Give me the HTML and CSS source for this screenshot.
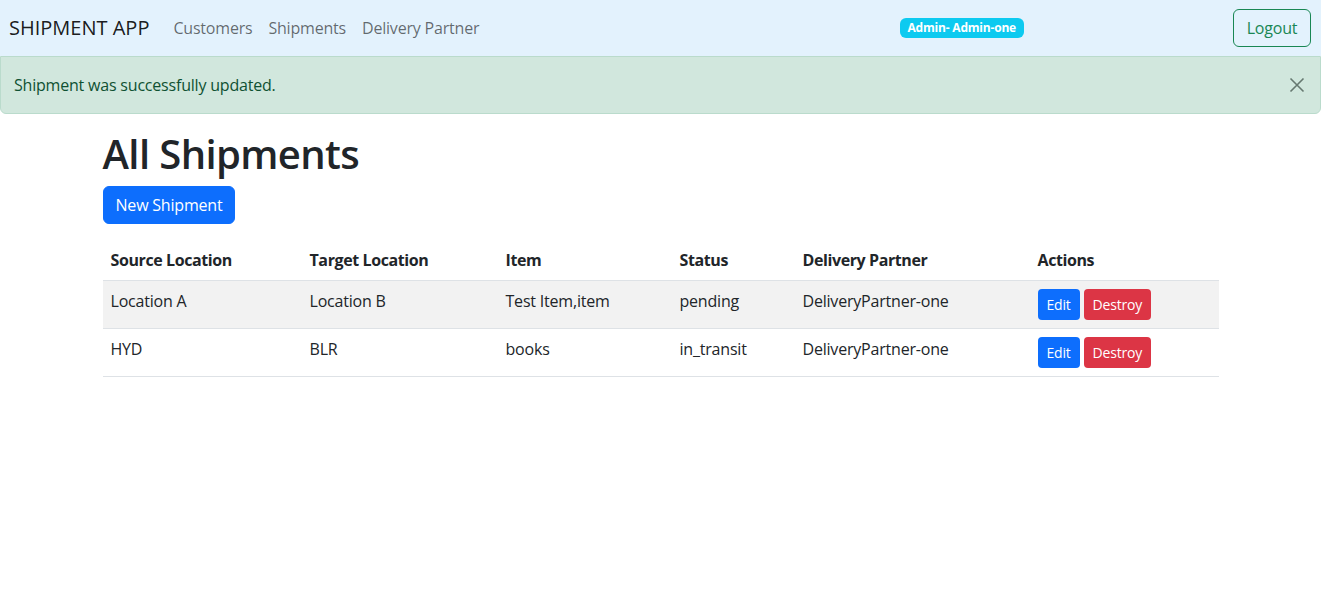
FILE: index.html
```html
<!DOCTYPE html>
<html lang="en">
<head>
<meta charset="utf-8">
<title>Shipment App</title>
<link rel="stylesheet" href="styles.css">
</head>
<body>
<nav class="navbar">
  <a class="brand" href="#">SHIPMENT APP</a>
  <ul class="nav-links">
    <li><a href="#">Customers</a></li>
    <li><a href="#">Shipments</a></li>
    <li><a href="#">Delivery Partner</a></li>
  </ul>
  <span class="badge">Admin- Admin-one</span>
  <button class="btn-logout">Logout</button>
</nav>
<div class="alert">
  <span>Shipment was successfully updated.</span>
  <button class="btn-close" aria-label="Close">
    <svg width="16" height="16" viewBox="0 0 16 16"><path d="M1.5 1.5 L14.5 14.5 M14.5 1.5 L1.5 14.5" stroke="#0f1f18" stroke-width="1.6" fill="none"/></svg>
  </button>
</div>
<main class="container">
  <h1 class="title">All Shipments</h1>
  <a class="btn btn-primary" href="#">New Shipment</a>
  <table class="table">
    <thead>
      <tr>
        <th class="c1">Source Location</th>
        <th class="c2">Target Location</th>
        <th class="c3">Item</th>
        <th class="c4">Status</th>
        <th class="c5">Delivery Partner</th>
        <th class="c6">Actions</th>
      </tr>
    </thead>
    <tbody>
      <tr class="striped">
        <td>Location A</td>
        <td>Location B</td>
        <td>Test Item,item</td>
        <td>pending</td>
        <td>DeliveryPartner-one</td>
        <td><div class="actions"><a class="btn-sm btn-primary" href="#">Edit</a><a class="btn-sm btn-danger" href="#">Destroy</a></div></td>
      </tr>
      <tr>
        <td>HYD</td>
        <td>BLR</td>
        <td>books</td>
        <td>in_transit</td>
        <td>DeliveryPartner-one</td>
        <td><div class="actions"><a class="btn-sm btn-primary" href="#">Edit</a><a class="btn-sm btn-danger" href="#">Destroy</a></div></td>
      </tr>
    </tbody>
  </table>
</main>
</body>
</html>
```

FILE: styles.css
```css
* { box-sizing: border-box; }
body {
  margin: 0;
  font-family: "Open Sans", "Liberation Sans", Arial, sans-serif;
  font-size: 16px;
  line-height: 1.5;
  letter-spacing: -0.2px;
  color: #212529;
  background: #fff;
}
a { text-decoration: none; }

.navbar {
  display: flex;
  align-items: center;
  height: 56px;
  padding: 8px 10px 8px 9px;
  background: #e3f2fd;
}
.brand {
  font-size: 20px;
  line-height: 30px;
  letter-spacing: 0;
  color: rgba(0,0,0,.9);
  margin-right: 16px;
  padding: 5px 0;
}
.nav-links {
  display: flex;
  list-style: none;
  margin: 0;
  padding: 0;
}
.nav-links a {
  display: block;
  padding: 8px 8px;
  color: rgba(0,0,0,.58);
}
.badge {
  margin-left: auto;
  margin-right: 209px;
  background: #0dcaf0;
  color: #fff;
  font-size: 12px;
  font-weight: 700;
  line-height: 12px;
  padding: 4px 8px;
  border-radius: 6px;
  white-space: nowrap;
  text-align: center;
}
.btn-logout {
  font: inherit;
  letter-spacing: inherit;
  color: #198754;
  background: transparent;
  border: 1px solid #198754;
  border-radius: 6px;
  padding: 6px 12px;
  height: 38px;
  width: 78px;
}

.alert {
  position: relative;
  background: #d1e7dd;
  border: 1px solid #badbcc;
  color: #0f5132;
  padding: 16px 48px 16px 13px;
  border-radius: 0 0 6px 6px;
  margin-bottom: 16px;
}
.btn-close {
  position: absolute;
  top: 0;
  right: 0;
  padding: 20px 15px;
  border: 0;
  background: transparent;
  opacity: .55;
  line-height: 0;
}

.container {
  max-width: 1140px;
  margin: 0 auto;
  padding: 0 12px;
}
.title {
  font-size: 40px;
  font-weight: 600;
  letter-spacing: -0.6px;
  line-height: 48px;
  margin: 0 0 8px;
}
.btn {
  display: inline-block;
  font-size: 16px;
  line-height: 24px;
  padding: 6px 12px;
  border: 1px solid transparent;
  border-radius: 6px;
}
.btn-primary { background: #0d6efd; color: #fff; border-color: #0d6efd; }
.btn-danger { background: #dc3545; color: #fff; border-color: #dc3545; }

.table {
  width: 100%;
  margin-top: 16px;
  border-collapse: collapse;
  table-layout: fixed;
}
.table th, .table td {
  text-align: left;
  padding: 8px;
  border-bottom: 1px solid #dee2e6;
  vertical-align: top;
}
.table th { font-weight: 700; letter-spacing: -0.4px; }
.c1 { width: 199px; }
.c2 { width: 196px; }
.c3 { width: 174px; }
.c4 { width: 123px; }
.c5 { width: 235px; }
.c6 { width: 189px; }
.striped td { background: #f2f2f2; }
.actions { display: flex; gap: 4px; }
.btn-sm {
  display: inline-block;
  font-size: 14px;
  line-height: 21px;
  padding: 4px 8px;
  border: 1px solid transparent;
  border-radius: 4px;
}
```
